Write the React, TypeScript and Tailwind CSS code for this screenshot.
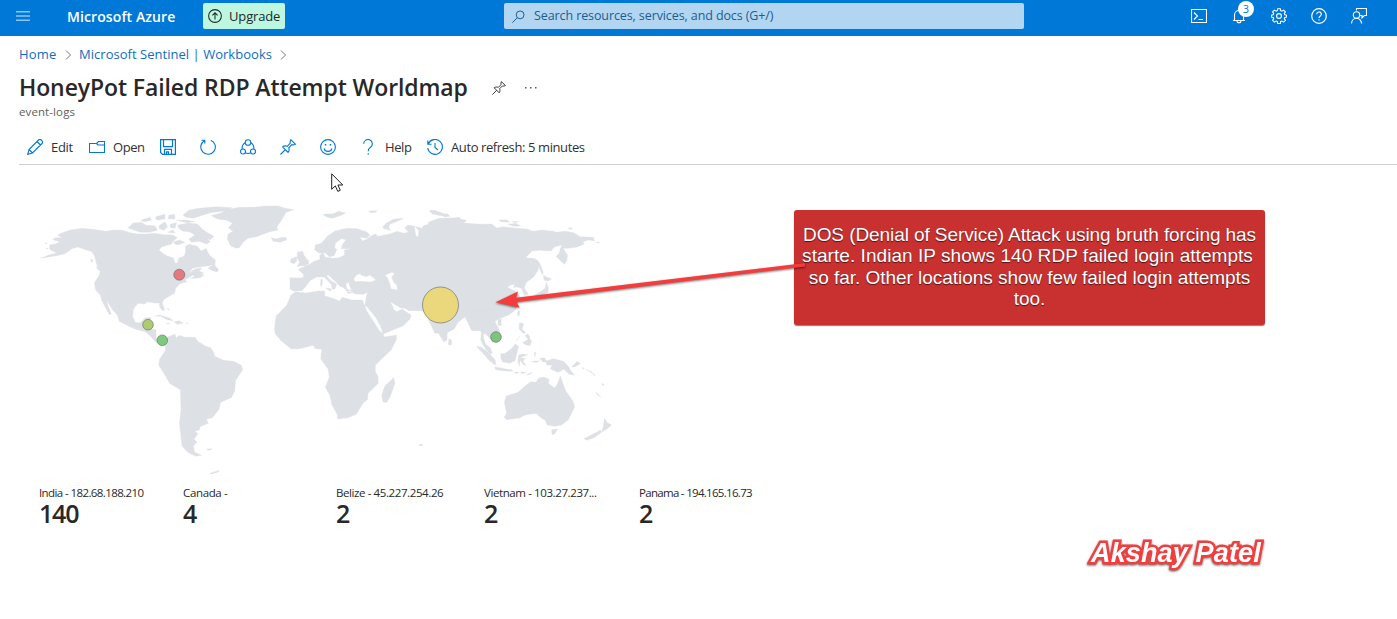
import type { ReactNode } from "react";

function Icon({ children, size = 16, className = "" }: { children: ReactNode; size?: number; className?: string }) {
  return (
    <svg
      width={size}
      height={size}
      viewBox="0 0 16 16"
      fill="none"
      stroke="currentColor"
      strokeWidth="1.1"
      className={"block shrink-0 " + className}
    >
      {children}
    </svg>
  );
}

const PinShape = () => (
  <path d="M.5 15.500 5.300 10.700M2.500 7.800 8.200 13.500M2.500 7.800C4 6.700 5.700 6.600 7.200 7.300L10.300 4.200C10 2.900 10.200 1.700 10.800.7L15.300 5.200C14.300 5.800 13.100 6 11.800 5.700L8.700 8.800C9.400 10.300 9.300 12 8.200 13.500" />
);

function Header() {
  return (
    <header className="flex h-9 items-start bg-[#0078d7] text-white">
      <div className="flex h-8 w-[67px] items-center pl-4">
        <svg width="14" height="10" viewBox="0 0 14 10" className="block text-[#8fc4ee]" fill="currentColor">
          <path d="M0 0h14v1.400H0zM0 4.300h14v1.400H0zM0 8.600h14V10H0z" />
        </svg>
      </div>
      <div className="w-[136px] whitespace-nowrap pt-px text-[14px] leading-8 font-semibold tracking-[0.1px]">Microsoft Azure</div>
      <div className="mt-[3px] flex h-[26px] w-[82px] items-center rounded-[2px] bg-[#bef7e0] pl-[5px] text-[#1b2a2a]">
        <Icon size={14}>
          <circle cx="8" cy="8" r="7.300" strokeWidth="1.200" />
          <path d="M8 12V4.500M5 7.400l3-3 3 3" strokeWidth="1.200" />
        </Icon>
        <span className="mt-px ml-[7px] whitespace-nowrap text-[13px] font-medium tracking-[-0.15px]">Upgrade</span>
      </div>
      <div className="mt-[3px] ml-[219px] flex h-[26px] w-[520px] items-center rounded-[2px] bg-[#b2d6f2] pl-2 text-[#1d5c91]">
        <Icon size={13}>
          <circle cx="10" cy="6" r="4.800" strokeWidth="1.200" />
          <path d="M6.500 9.500.5 15.500" strokeWidth="1.200" />
        </Icon>
        <span className="mt-px ml-[9px] whitespace-nowrap text-[12.500px] tracking-[-0.1px]">Search resources, services, and docs (G+/)</span>
      </div>
      <div className="ml-[167px] flex h-8 items-center gap-6">
        <Icon>
          <path d="M.5 1.500h15v13H.5zM3 4.500l3.500 3.500L3 11.500M7.500 11.500H12" />
        </Icon>
        <div className="relative">
          <Icon>
            <path d="M2 12.500h12M3.500 12.500V7a4.500 4.500 0 0 1 9 0v5.500M6 12.800a2 2 0 0 0 4 0" />
          </Icon>
          <span className="absolute -top-[7px] left-[7px] h-4 w-4 rounded-full bg-white text-center text-[11px] leading-4 text-[#0078d7]">3</span>
        </div>
        <Icon>
          <circle cx="8" cy="8" r="2.400" />
          <path d="M6.700.7h2.600l.4 2 1.200.5 1.700-1.100 1.800 1.800-1.100 1.700.5 1.200 2 .4v1.800l-2 .4-.5 1.200 1.100 1.700-1.800 1.800-1.700-1.100-1.200.5-.4 2H6.700l-.4-2-1.200-.5-1.700 1.100-1.800-1.800 1.100-1.700-.5-1.200-2-.4V7.200l2-.4.5-1.200-1.100-1.700 1.800-1.800 1.700 1.100 1.200-.5z" />
        </Icon>
        <Icon>
          <circle cx="8" cy="8" r="7.300" strokeWidth="1.200" />
          <path d="M5.700 6.300a2.300 2.300 0 1 1 3.400 2C8.300 8.800 8 9.200 8 10M8 11.300v1.300" strokeWidth="1.200" />
        </Icon>
        <Icon>
          <circle cx="5.500" cy="7" r="3.200" />
          <path d="M.6 15.500c0-3 2-5.200 4.900-5.200s5 2.200 5 5.200M5.500 2.500V.5h10v7h-2.200L11 9.800V7.500H9" />
        </Icon>
      </div>
    </header>
  );
}

const Chevron = () => (
  <svg width="7" height="10" viewBox="0 0 7 10" fill="none" stroke="#777" className="block">
    <path d="M1 .5 5.500 5 1 9.500" />
  </svg>
);

function Toolbar() {
  return (
    <div className="ml-[19px] flex h-[35px] items-center border-b border-[#d2d0ce] pl-2 text-[13px] text-[#323130]">
      <div className="flex w-[62px] items-center gap-2">
        <Icon className="text-[#0078d4]">
          <path d="M.7 15.300 2 10.500 11.500 1a1.900 1.900 0 0 1 2.700 0l.8.8a1.900 1.900 0 0 1 0 2.700L5.500 14zM2 10.500 5.500 14M10 2.500 13.500 6" />
        </Icon>
        <span className="pt-0.5 tracking-[-0.3px]">Edit</span>
      </div>
      <div className="flex w-[71px] items-center gap-2">
        <Icon className="text-[#0078d4]">
          <path d="M.5 4.500h7l2-2h6v11H.5zM7.500 4.500 9 6h6.500" />
        </Icon>
        <span className="pt-0.5 tracking-[-0.45px]">Open</span>
      </div>
      <div className="flex w-[200px] gap-6 text-[#0078d4]">
        <Icon>
          <path d="M.6.6h14.800v14.800H2.500L.6 13.500zM3.500.7v7h9v-7M4.500 15.300v-5h7v5M6.500 15.300v-2.500h2v2.500" strokeWidth="1.200" />
        </Icon>
        <Icon>
          <path d="M10.800 1.200A7.300 7.300 0 1 1 4.300 1.700M1.500 1.300h3.300v3.300" strokeWidth="1.100" />
        </Icon>
        <Icon>
          <circle cx="8" cy="3.500" r="2.800" />
          <circle cx="3" cy="12.500" r="2.500" />
          <circle cx="13" cy="12.500" r="2.500" />
          <path d="M5.200 3.800C3.100 4.900 1.900 7.200 2.200 10M10.800 3.800c2.100 1.100 3.300 3.400 3 6.200M5.300 13.800c1.700.8 3.700.8 5.400 0" />
        </Icon>
        <Icon>
          <PinShape />
        </Icon>
        <Icon>
          <circle cx="8" cy="8" r="7.400" strokeWidth="1.100" />
          <path d="M4 9.500a4.200 4.200 0 0 0 8 0" strokeWidth="1.100" />
          <path d="M4.800 5h1.500v1.500H4.800zM9.700 5h1.500v1.500H9.700z" fill="currentColor" stroke="none" />
        </Icon>
      </div>
      <div className="flex w-[67px] items-center gap-[9px]">
        <Icon className="text-[#0078d4]">
          <path d="M3.700 4.800a4.300 4.300 0 1 1 6.800 3.500C8.800 9.500 8.200 10.300 8.200 12.300M8.200 14.300v1.400" />
        </Icon>
        <span className="pt-0.5 tracking-[-0.4px]">Help</span>
      </div>
      <div className="flex items-center gap-2">
        <Icon className="text-[#0078d4]">
          <path d="M1.200 5A7.400 7.400 0 1 1 .7 9M.8 1.500V5.200h3.700M8 4v4.500l3 2.500" strokeWidth="1.100" />
        </Icon>
        <span className="whitespace-nowrap pt-0.5 tracking-[-0.4px]">Auto refresh: 5 minutes</span>
      </div>
    </div>
  );
}

function WorldMap() {
  return (
    <svg width="600" height="285" viewBox="30 195 600 285" className="ml-[30px] block">
      <g fill="#dde0e5" stroke="#dde0e5" strokeWidth="1" strokeLinejoin="round">
        {/* North America, Arctic islands, Greenland, Caribbean */}
        <g transform="translate(30 195) scale(.33333)">
          <path d="M32 190 56 180 80 174 68 168 58 162 60 149 76 147 90 140 68 134 76 128 97 128 83 121 95 114 122 105 155 100 188 103 228 109 250 105 278 106 300 113 325 117 350 117 375 115 400 119 428 120 442 128 428 140 425 147 396 155 387 165 398 175 412 183 430 188 435 204 443 204 445 190 462 184 467 172 466 154 478 148 502 154 514 168 528 160 538 180 556 195 555 207 538 212 513 215 489 219 474 235 495 222 516 218 508 228 522 235 500 244 492 249 492 239 465 254 472 260 450 266 437 280 434 294 402 313 397 324 404 345 397 347 389 336 388 324 375 324 351 320 345 327 324 325 310 342 308 365 317 383 333 383 344 369 363 367 359 384 354 396 365 402 378 405 378 428 390 440 404 443 415 438 419 450 390 450 374 438 362 424 346 410 321 404 301 396 268 379 262 360 245 341 230 316 234 333 244 357 238 359 226 337 216 318 211 300 197 286 193 263 207 242 212 223 200 209 193 181 184 169 166 164 144 156 126 161 105 176 80 182Z" />
          <path d="M294 99 310 84 334 82 349 91 374 92 383 105 360 112 330 112ZM332 76 360 67 365 75 342 81ZM376 66 405 57 405 72 381 76ZM417 61 434 58 435 72 414 71ZM387 92 405 80 413 96 401 106 388 101ZM420 88 440 83 435 100 421 98ZM443 90 475 84 502 87 516 101 530 112 552 124 542 134 532 131 541 140 530 147 507 139 485 142 476 133 495 120 478 110 459 109 446 100ZM414 112 429 105 435 114ZM430 141 448 135 465 142 446 149 436 148ZM440 76 470 75 494 80 470 83ZM459 60 476 46 505 40 560 35 607 38 590 47 542 53 510 63 490 70 468 67ZM534 220 553 206 559 217 566 224 562 231 548 227ZM481 251 504 239 523 240 510 248ZM182 193 190 195 185 203ZM198 213 215 220 218 231 204 224Z" />
          <path d="M544 62 575 53 588 45 626 37 671 37 706 33 745 33 765 40 792 44 768 52 757 72 748 85 740 97 744 105 717 111 703 116 680 125 654 130 640 141 628 158 619 160 602 153 592 132 594 117 609 109 595 98 607 85 591 76 562 72Z" />
          <path d="M724 128 738 132 756 127 769 128 770 135 750 142 729 139ZM374 363 390 360 419 369 430 377 411 374 392 364ZM407 385 418 385 415 388ZM432 380 448 377 460 384 442 388ZM467 384 475 385 471 387ZM411 340 418 342 415 346ZM46 143 52 145 47 147ZM47 159 54 160 50 162Z" />
        </g>

        {/* South America */}
        <g transform="translate(130 310) scale(.33333)">
          <path d="M105 93 115 80 135 72 139 84 147 76 165 82 195 82 205 95 226 108 242 113 251 127 253 138 280 151 310 154 334 166 338 179 317 211 314 243 304 263 272 277 267 298 246 324 229 327 235 340 210 350 208 360 195 364 204 371 192 388 201 396 190 408 194 427 215 436 197 439 173 427 156 408 153 380 148 340 153 300 151 239 120 221 100 187 86 166 89 147 107 121Z" />
          <path d="M230 417 246 416 243 420 234 421ZM240 490 253 485 269 481 265 486 244 492Z" />
        </g>

        {/* Europe, western Asia */}
        <g transform="translate(260 195) scale(.33333)">
          <path d="M120 220 132 216 149 208 160 200 180 193 179 180 190 174 196 187 218 190 239 188 254 179 253 165 276 161 244 161 248 147 258 134 244 131 226 145 224 160 231 163 222 182 208 185 195 173 178 175 164 165 166 149 184 145 202 124 225 108 260 100 291 101 320 110 330 121 320 130 300 126 307 138 320 133 337 121 347 117 354 124 386 118 412 109 431 115 445 111 434 98 444 90 463 94 468 123 475 126 476 106 465 94 485 100 492 91 508 88 530 81 550 79 570 70 600 67 600 375 580 389 550 389 515 370 490 347 447 347 433 340 422 339 391 320 402 345 412 350 427 343 453 362 440 378 413 390 360 390 347 367 317 331 322 292 311 298 286 297 270 287 260 280 258 265 270 262 283 262 274 262 266 265 274 285 262 289 250 278 240 274 228 261 204 239 200 243 211 256 230 267 225 282 218 283 213 267 193 246 170 246 150 257 136 276 126 287 100 288 90 282 90 248 118 249 131 247 130 237 115 225ZM281 253 289 241 298 236 309 242 318 245 330 240 348 255 332 261 303 259 286 260ZM375 241 383 249 389 265 393 281 412 285 411 271 401 262 395 245 404 236 396 232 383 237Z" fillRule="evenodd" />
          <path d="M318 234 332 232 325 237ZM113 171 128 169 132 181 145 197 147 207 111 215 119 202 111 188ZM93 192 110 185 110 199 101 207 91 202ZM183 251 187 254 186 274 181 271ZM197 279 215 281 211 289ZM260 289 277 293 265 296ZM299 292 314 293 304 297ZM121 211 146 210 134 214ZM190 58 220 56 236 49 257 54 245 60 231 65 218 70 207 68 193 62ZM325 48 350 47 348 52 333 53ZM368 97 378 85 400 73 430 69 420 76 389 88 386 98 392 106 372 101ZM507 48 521 47 546 54 560 59 558 65 535 60Z" />
        </g>

        {/* Africa, Arabia, Madagascar */}
        <g transform="translate(260 290) scale(.33333)">
          <path d="M106 5 136 9 177 3 194 3 194 17 222 26 238 33 247 22 275 30 307 30 320 62 340 94 359 123 370 132 371 141 410 135 409 149 394 179 346 225 346 245 354 259 355 280 324 310 323 328 309 340 289 373 264 383 232 387 232 374 215 343 210 317 196 292 208 261 204 237 182 206 186 178 166 176 160 166 119 176 94 177 63 152 47 133 43 119 48 79 81 45 92 16ZM314 50 320 45 357 93 369 133 392 123 430 107 450 87 453 75 426 58 405 68 389 37 376 20 320 15ZM401 263 405 279 390 322 379 338 369 335 365 316 374 289Z" />
          <path d="M477 464 486 462 488 467 480 468ZM264 151 267 154 264 156ZM317 149 319 151 317 153ZM291 232 296 237Z" />
        </g>

        {/* Northern and eastern Asia */}
        <g transform="translate(430 200) scale(.33333)">
          <path d="M-5 67 27 55 60 54 82 55 110 61 101 68 130 71 164 73 185 72 200 84 220 80 252 84 290 87 309 94 336 90 371 94 378 97 406 94 432 98 450 110 490 112 494 122 476 120 458 126 463 132 442 141 414 145 399 145 413 165 410 182 403 193 390 181 378 169 388 160 391 145 397 135 374 140 363 153 329 151 306 153 287 173 310 175 321 180 326 192 325 210 311 231 288 248 283 265 295 282 283 286 274 265 260 261 250 263 255 253 241 255 232 262 254 272 270 289 261 313 256 331 235 346 208 356 195 364 202 380 209 392 180 392 125 392 105 350 85 366 73 387 47 400 15 400 -5 360Z" />
          <path d="M0 31 18 32 36 40 28 46 6 42ZM36 42 52 41 60 49 44 51ZM206 60 230 59 239 67 213 65ZM245 64 267 65 255 68ZM234 73 257 70 272 78 251 79ZM413 84 427 83 424 89ZM497 126 509 127 504 130ZM320 180 329 189 340 216 338 225 330 208 320 190ZM340 226 355 233 365 236 355 243 342 241ZM350 246 355 265 354 279 338 284 323 288 313 286 326 278 344 266ZM306 289 315 290 312 298 305 295ZM265 330 270 335 267 350 262 343ZM204 370 213 368 215 375 205 378ZM268 370 278 370 276 389 268 386Z" />
        </g>

        {/* Southern Asia, Oceania */}
        <g transform="translate(430 290) scale(.33333)">
          <path d="M14 101 30 138 42 156 51 150 52 122 78 99 106 80 120 92 133 113 148 114 154 128 152 151 166 176 181 192 187 190 181 173 166 162 159 135 166 130 180 146 188 158 207 143 210 129 202 110 190 99 192 86 215 77 200 60 110 60 20 70ZM57 145 66 153 64 165 55 164ZM204 89 214 86 213 98 204 101ZM139 169 154 172 178 190 196 211 197 226 179 213 163 194ZM194 231 213 234 233 238 246 239 248 244 218 242 197 239ZM212 191 226 190 246 174 256 162 266 170 261 188 255 212 239 220 218 216 212 203ZM266 195 278 192 293 194 278 200 270 204 286 205 279 214 288 227 279 223 270 210 268 229 264 215ZM251 246 266 247 260 252ZM272 246 289 247 276 252ZM289 254 307 247 299 254ZM271 98 281 102 275 118 287 127 281 131 268 119ZM278 158 292 149 296 140 305 153 300 167 286 164ZM285 135 294 132 300 142 290 144ZM258 153 270 138 261 150ZM312 188 318 187 315 201ZM304 214 329 212 318 218ZM329 204 345 204 350 215 338 216ZM348 213 370 206 400 214 415 229 422 242 434 255 417 253 402 238 384 247 361 237 366 226 350 225ZM425 230 442 214 451 221 434 231ZM457 232 464 237 458 236ZM470 237 476 244 469 240ZM479 241 489 249 481 247ZM488 249 497 257 490 254Z" />
          <path d="M223 337 229 318 264 307 285 288 302 275 317 277 327 264 342 261 358 268 355 280 374 294 383 281 391 257 401 287 408 304 429 333 434 351 415 389 395 405 374 409 351 405 346 391 333 383 318 370 288 374 268 384 231 389 222 382 230 370ZM365 419 383 417 374 432 366 434ZM523 385 532 398 545 405 531 417 515 426 520 411ZM512 420 515 427 492 443 470 451 462 446 484 435ZM498 306 513 321 502 315ZM516 280 523 285 518 288Z" />
        </g>
      </g>
      <g stroke="#68706a" strokeOpacity=".65" strokeWidth="1">
        <circle cx="179.300" cy="274.700" r="5.500" fill="#e47982" />
        <circle cx="148" cy="324.700" r="5.300" fill="#aecb70" />
        <circle cx="162.300" cy="340.300" r="5.300" fill="#7dc97d" />
        <circle cx="496" cy="337" r="5.300" fill="#7dc47d" />
        <circle cx="440.500" cy="305" r="18" fill="#ebd87d" />
      </g>
    </svg>
  );
}

const stats = [
  { label: "India - 182.68.188.210", value: "140", width: "w-[144px]", tracking: "tracking-[-0.6px]" },
  { label: "Canada -", value: "4", width: "w-[153px]", tracking: "tracking-[-0.35px]" },
  { label: "Belize - 45.227.254.26", value: "2", width: "w-[148px]", tracking: "tracking-[-0.4px]" },
  { label: "Vietnam - 103.27.237...", value: "2", width: "w-[155px]", tracking: "tracking-[-0.4px]" },
  { label: "Panama - 194.165.16.73", value: "2", width: "w-[150px]", tracking: "tracking-[-0.7px]" },
];

export default function App() {
  return (
    <div className="relative h-[619px] w-[1397px] overflow-hidden bg-white font-['Open_Sans','Noto_Sans',sans-serif] text-[#292827]">
      <Header />
      <nav className="flex h-9 items-center pt-0.5 pl-[19px] text-[13px] text-[#106ebe]">
        <span className="w-[46px] tracking-[0.15px]">Home</span>
        <Chevron />
        <span className="ml-[7px] w-[201px] whitespace-nowrap tracking-[0.03px]">Microsoft Sentinel | Workbooks</span>
        <Chevron />
      </nav>
      <div className="flex h-8 items-center pl-[19px]">
        <h1 className="w-[473px] whitespace-nowrap pb-0.5 text-[23px] font-semibold tracking-[-0.1px]">HoneyPot Failed RDP Attempt Worldmap</h1>
        <Icon size={14} className="text-[#323130]">
          <PinShape />
        </Icon>
        <svg width="12" height="2" viewBox="0 0 12 2" className="ml-[19px] block" fill="#605e5c">
          <path d="M0 0h1.500v1.500H0zM5 0h1.500v1.500H5zM10 0h1.500v1.500H10z" />
        </svg>
      </div>
      <div className="h-[26px] pl-[19px] text-[11.500px] leading-4 tracking-[0.1px] text-[#605e5c]">event-logs</div>
      <Toolbar />
      <main className="pt-[30px]">
        <WorldMap />
        <div className="flex pt-1 pl-[39px]">
          {stats.map((s) => (
            <div key={s.label} className={"shrink-0 whitespace-nowrap " + s.width}>
              <div className={"text-[11.500px] leading-[18px] " + s.tracking}>{s.label}</div>
              <div className="-mt-px text-[25px] leading-6 font-semibold tracking-[-1.200px]">{s.value}</div>
            </div>
          ))}
        </div>
      </main>

      <svg width="13" height="20" viewBox="0 0 13 20" className="absolute top-[173px] left-[331px]">
        <path d="M.7.8v15.500l3.600-3.400 2.500 5.500 2.500-1.100-2.400-5.300h4.900z" fill="#fff" stroke="#222" />
      </svg>

      <div className="absolute top-[210px] left-[794px] flex h-[115px] w-[471px] flex-col items-center rounded-[3px] bg-[#c93030] pt-[13.500px] font-['Liberation_Sans',Arial,sans-serif] text-[19px] leading-[21.500px] whitespace-nowrap text-white shadow-[0_1px_1px_rgba(0,0,0,0.5)] [text-shadow:0_1px_1px_rgba(0,0,0,0.6)]">
        <div className="tracking-[-0.080px]">DOS (Denial of Service) Attack using bruth forcing has</div>
        <div className="pr-1 tracking-[0.050px]">starte. Indian IP shows 140 RDP failed login attempts</div>
        <div className="tracking-[-0.040px]">so far. Other locations show few failed login attempts</div>
        <div>too.</div>
      </div>
      <svg width="320" height="60" viewBox="490 255 320 60" className="absolute top-[255px] left-[490px] drop-shadow-[0_1px_1px_rgba(0,0,0,0.55)]">
        <path d="M495.500 302.300 518 291.500 516 297.700 805 263 805 266.500 516.500 302 519.500 307.500Z" fill="#f33c3b" />
      </svg>
      <div className="absolute top-[536px] left-[1091px] whitespace-nowrap font-['Liberation_Sans',Arial,sans-serif] text-[27px] leading-[34px] font-bold tracking-[0.150px] text-white italic drop-shadow-[0_1px_1px_rgba(0,0,0,0.6)] [-webkit-text-stroke:5px_#f23e3e] [paint-order:stroke_fill] [stroke-linejoin:round]">
        Akshay Patel
      </div>
    </div>
  );
}
